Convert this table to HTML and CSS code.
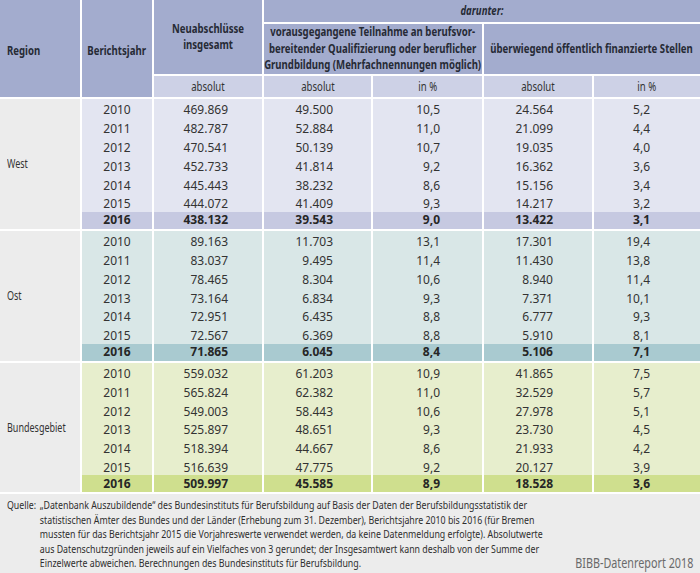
FILE: index.html
```html
<!DOCTYPE html>
<html lang="de">
<head>
<meta charset="utf-8">
<title>Neuabschlüsse</title>
<link rel="stylesheet" href="styles.css">
</head>
<body>
<div class="page">
<table class="tbl">
  <colgroup>
    <col class="c-region"><col class="c-year"><col class="c-neu"><col class="c-abs1"><col class="c-pct1"><col class="c-abs2"><col class="c-pct2">
  </colgroup>
  <thead>
    <tr class="h1">
      <th rowspan="3" class="hd first left"><div class="hx l"><span class="cx">Region</span></div></th>
      <th rowspan="3" class="hd yrh"><div class="hx"><span class="cx">Berichtsjahr</span></div></th>
      <th rowspan="2" class="hd"><div class="hx"><span class="cx">Neuabschlüsse<br>insgesamt</span></div></th>
      <th colspan="4" class="hd dar"><div class="hx"><span class="cx"><em>darunter:</em></span></div></th>
    </tr>
    <tr class="h2">
      <th colspan="2" class="hd"><div class="hx"><span class="cx">vorausgegangene Teilnahme an berufsvor-<br>bereitender Qualifizierung oder beruflicher<br>Grundbildung (Mehrfachnennungen möglich)</span></div></th>
      <th colspan="2" class="hd"><div class="hx"><span class="cx">überwiegend öffentlich finanzierte Stellen</span></div></th>
    </tr>
    <tr class="h3">
      <th class="sub"><div class="hx"><span class="cs">absolut</span></div></th>
      <th class="sub"><div class="hx"><span class="cs">absolut</span></div></th>
      <th class="sub"><div class="hx"><span class="cs">in %</span></div></th>
      <th class="sub"><div class="hx"><span class="cs">absolut</span></div></th>
      <th class="sub"><div class="hx"><span class="cs">in %</span></div></th>
    </tr>
  </thead>
  <tbody class="west">
    <tr><td rowspan="7" class="region"><span class="rl">West</span></td><td class="yr">2010</td><td class="n">469.869</td><td class="a1">49.500</td><td class="p1">10,5</td><td class="a2">24.564</td><td class="p2">5,2</td></tr>
    <tr><td class="yr">2011</td><td class="n">482.787</td><td class="a1">52.884</td><td class="p1">11,0</td><td class="a2">21.099</td><td class="p2">4,4</td></tr>
    <tr><td class="yr">2012</td><td class="n">470.541</td><td class="a1">50.139</td><td class="p1">10,7</td><td class="a2">19.035</td><td class="p2">4,0</td></tr>
    <tr><td class="yr">2013</td><td class="n">452.733</td><td class="a1">41.814</td><td class="p1">9,2</td><td class="a2">16.362</td><td class="p2">3,6</td></tr>
    <tr><td class="yr">2014</td><td class="n">445.443</td><td class="a1">38.232</td><td class="p1">8,6</td><td class="a2">15.156</td><td class="p2">3,4</td></tr>
    <tr><td class="yr">2015</td><td class="n">444.072</td><td class="a1">41.409</td><td class="p1">9,3</td><td class="a2">14.217</td><td class="p2">3,2</td></tr>
    <tr class="tot"><td class="yr">2016</td><td class="n">438.132</td><td class="a1">39.543</td><td class="p1">9,0</td><td class="a2">13.422</td><td class="p2">3,1</td></tr>
  </tbody>
  <tbody class="ost">
    <tr><td rowspan="7" class="region"><span class="rl">Ost</span></td><td class="yr">2010</td><td class="n">89.163</td><td class="a1">11.703</td><td class="p1">13,1</td><td class="a2">17.301</td><td class="p2">19,4</td></tr>
    <tr><td class="yr">2011</td><td class="n">83.037</td><td class="a1">9.495</td><td class="p1">11,4</td><td class="a2">11.430</td><td class="p2">13,8</td></tr>
    <tr><td class="yr">2012</td><td class="n">78.465</td><td class="a1">8.304</td><td class="p1">10,6</td><td class="a2">8.940</td><td class="p2">11,4</td></tr>
    <tr><td class="yr">2013</td><td class="n">73.164</td><td class="a1">6.834</td><td class="p1">9,3</td><td class="a2">7.371</td><td class="p2">10,1</td></tr>
    <tr><td class="yr">2014</td><td class="n">72.951</td><td class="a1">6.435</td><td class="p1">8,8</td><td class="a2">6.777</td><td class="p2">9,3</td></tr>
    <tr><td class="yr">2015</td><td class="n">72.567</td><td class="a1">6.369</td><td class="p1">8,8</td><td class="a2">5.910</td><td class="p2">8,1</td></tr>
    <tr class="tot"><td class="yr">2016</td><td class="n">71.865</td><td class="a1">6.045</td><td class="p1">8,4</td><td class="a2">5.106</td><td class="p2">7,1</td></tr>
  </tbody>
  <tbody class="bund">
    <tr><td rowspan="7" class="region"><span class="rl">Bundesgebiet</span></td><td class="yr">2010</td><td class="n">559.032</td><td class="a1">61.203</td><td class="p1">10,9</td><td class="a2">41.865</td><td class="p2">7,5</td></tr>
    <tr><td class="yr">2011</td><td class="n">565.824</td><td class="a1">62.382</td><td class="p1">11,0</td><td class="a2">32.529</td><td class="p2">5,7</td></tr>
    <tr><td class="yr">2012</td><td class="n">549.003</td><td class="a1">58.443</td><td class="p1">10,6</td><td class="a2">27.978</td><td class="p2">5,1</td></tr>
    <tr><td class="yr">2013</td><td class="n">525.897</td><td class="a1">48.651</td><td class="p1">9,3</td><td class="a2">23.730</td><td class="p2">4,5</td></tr>
    <tr><td class="yr">2014</td><td class="n">518.394</td><td class="a1">44.667</td><td class="p1">8,6</td><td class="a2">21.933</td><td class="p2">4,2</td></tr>
    <tr><td class="yr">2015</td><td class="n">516.639</td><td class="a1">47.775</td><td class="p1">9,2</td><td class="a2">20.127</td><td class="p2">3,9</td></tr>
    <tr class="tot"><td class="yr">2016</td><td class="n">509.997</td><td class="a1">45.585</td><td class="p1">8,9</td><td class="a2">18.528</td><td class="p2">3,6</td></tr>
  </tbody>
</table>
<div class="foot">
  <div class="foot-inner">
    <div class="q-label">Quelle:</div>
    <div class="q-text">„Datenbank Auszubildende“ des Bundesinstituts für Berufsbildung auf Basis der Daten der Berufsbildungsstatistik der<br>statistischen Ämter des Bundes und der Länder (Erhebung zum 31. Dezember), Berichtsjahre 2010 bis 2016 (für Bremen<br>mussten für das Berichtsjahr 2015 die Vorjahreswerte verwendet werden, da keine Datenmeldung erfolgte). Absolutwerte<br>aus Datenschutzgründen jeweils auf ein Vielfaches von 3 gerundet; der Insgesamtwert kann deshalb von der Summe der<br>Einzelwerte abweichen. Berechnungen des Bundesinstituts für Berufsbildung.</div>
    <div class="q-src">BIBB-Datenreport 2018</div>
  </div>
</div>
</div>
</body>
</html>
```

FILE: styles.css
```css
html, body {
  margin: 0;
  padding: 0;
  background: #ffffff;
}
.page {
  width: 700px;
  overflow: hidden;
  font-family: "Noto Sans", "DejaVu Sans", sans-serif;
  color: #333333;
}
.tbl {
  width: 700px;
  table-layout: fixed;
  border-collapse: separate;
  border-spacing: 0;
  font-size: 12px;
}
.c-region { width: 80px; }
.c-year { width: 72px; }
.c-neu { width: 110px; }
.c-abs1 { width: 109px; }
.c-pct1 { width: 111px; }
.c-abs2 { width: 110px; }
.c-pct2 { width: 108px; }

th, td {
  padding: 0;
  border-left: 2px solid #ffffff;
  box-sizing: border-box;
}
th.first, td.region { border-left: 0; }

/* header */
.hd {
  background: #a3acce;
  color: #262a35;
  font-weight: bold;
  font-size: 12px;
  line-height: 16.4px;
  text-align: center;
  vertical-align: middle;
  white-space: nowrap;
  border-bottom: 2px solid #ffffff;
}
.hd.left { padding-left: 7px; padding-top: 5px; }
.hd.yrh { padding-top: 5px; }
.hx {
  display: flex;
  justify-content: center;
}
.hx.l { justify-content: flex-start; }
.cx {
  display: inline-block;
  flex: none;
  margin: 0 -12%;
  text-align: center;
  transform: scaleX(0.8);
}
.hx.l .cx { margin: 0; transform-origin: 0 50%; }
.cs {
  display: inline-block;
  flex: none;
  transform: scaleX(0.8);
}
.dar em { font-style: italic; }
.h1 { height: 24px; }
.h2 { height: 52px; }
.h3 { height: 23px; }
.sub {
  background: #cdd1e6;
  font-weight: normal;
  color: #333;
  text-align: center;
  white-space: nowrap;
  border-bottom: 2px solid #ffffff;
}

/* body */
tbody tr { height: 18.8px; }
tbody tr.tot { height: 19px; }
td {
  line-height: 15px;
  padding-top: 3px;
  white-space: nowrap;
  vertical-align: middle;
}
tr.tot td { padding-top: 0; line-height: 16px; }
td.region {
  background: #ececec;
  text-align: left;
  padding-left: 7px;
  padding-top: 0;
  border-bottom: 2px solid #ffffff;
}
.rl {
  display: inline-block;
  transform: scaleX(0.75);
  transform-origin: 0 50%;
}
tr.tot td { border-bottom: 2px solid #ffffff; font-weight: bold; color: #262626; }

.yr { text-align: center; }
.n { text-align: right; padding-right: 34px; }
.a1 { text-align: right; padding-right: 38px; }
.p1 { text-align: right; padding-right: 42px; }
.a2 { text-align: right; padding-right: 39px; }
.p2 { text-align: right; padding-right: 50px; }

.west td { background: #e3e5f1; }
.west tr.tot td { background: #c6c9e1; }
.ost td { background: #d9e7e7; }
.ost tr.tot td { background: #a9cad0; }
.bund td { background: #e7eecd; }
.bund tr.tot td { background: #cfdf8e; }
td.region { background: #ececec !important; }

/* footer */
.foot {
  background: #ececec;
  height: 79px;
  box-sizing: border-box;
  padding: 4px 6px 3px 7px;
  overflow: hidden;
}
.foot-inner {
  width: 858px;
  height: 72px;
  display: flex;
  align-items: flex-start;
  transform: scaleX(0.8);
  transform-origin: 0 0;
  font-size: 11px;
  line-height: 14.5px;
  color: #2e2e2e;
}
.q-label { width: 41px; flex: none; }
.q-text { white-space: nowrap; flex: none; }
.q-src {
  margin-left: auto;
  align-self: flex-end;
  white-space: nowrap;
  color: #6a6a6a;
  font-size: 13.5px;
  line-height: 14.5px;
}
```
